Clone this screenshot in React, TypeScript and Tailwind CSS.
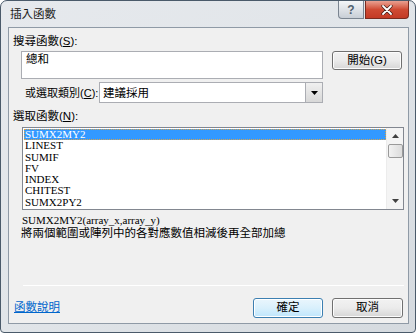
import React from "react";

const cjk = '"Liberation Sans", "Noto Sans CJK TC", "Noto Sans CJK SC", sans-serif';

function Btn({ label, def, className = "" }: { label: string; def?: boolean; className?: string }) {
  return (
    <div
      className={
        "flex items-center justify-center rounded-[3px] border text-[11.5px] text-black " +
        (def
          ? "border-[#3c7fb1] bg-gradient-to-b from-[#eaf6fd] via-[#d9f0fc] to-[#bee6fd] shadow-[inset_0_0_0_1px_#ffffff]"
          : "border-[#707070] bg-gradient-to-b from-[#f2f2f2] via-[#ebebeb] to-[#d6d6d6] shadow-[inset_0_0_0_1px_#fcfcfc]") +
        " " +
        className
      }
      style={{ fontFamily: cjk }}
    >
      {label}
    </div>
  );
}

export default function App() {
  const items = ["SUMX2MY2", "LINEST", "SUMIF", "FV", "INDEX", "CHITEST", "SUMX2PY2"];
  return (
    <div className="w-[416px] h-[333px] bg-white">
      <div className="relative w-[416px] h-[333px] rounded-t-[7px] rounded-b-[4px] border border-[#4a5a6a] bg-gradient-to-br from-[#e6e9ed] via-[#e1e5e9] to-[#d5dadf] flex flex-col">
        {/* title bar */}
        <div className="h-[26px] flex items-start">
          <div className="pl-[9px] pt-[5px] text-[11.5px] text-[#1a1a1a]" style={{ fontFamily: cjk }}>
            插入函數
          </div>
          <div className="ml-auto mr-[6px] flex gap-[1px]">
            <div className="w-[26px] h-[18px] rounded-bl-[4px] border border-t-0 border-[#7a8490] bg-gradient-to-b from-[#f4f6f8] to-[#c8ced6] flex items-center justify-center text-[12px] font-bold text-[#50606e]" style={{ fontFamily: '"Liberation Sans", sans-serif' }}>
              ?
            </div>
            <div className="w-[44px] h-[18px] rounded-br-[4px] border border-t-0 border-[#7a2a1e] bg-gradient-to-b from-[#e8a091] via-[#cf4a33] to-[#c43a25] flex items-center justify-center">
              <svg width="12" height="10" viewBox="0 0 12 10">
                <path d="M2 1 L10 9 M10 1 L2 9" stroke="#3b1a14" strokeWidth="3.2" strokeLinecap="round" />
                <path d="M2 1 L10 9 M10 1 L2 9" stroke="#ffffff" strokeWidth="1.8" strokeLinecap="round" />
              </svg>
            </div>
          </div>
        </div>
        {/* client */}
        <div className="ml-[7px] mr-[6px] h-[297px] border border-[#8f9aa6] bg-[#f0f0f0] flex flex-col text-[11.5px] text-black" style={{ fontFamily: cjk }}>
          <div className="pl-[4px] pt-[5px] leading-[16px] whitespace-nowrap">搜尋函數(<span className="underline">S</span>):</div>
          <div className="flex mt-[2px]">
            <div className="ml-[12px] w-[302px] h-[28px] border border-[#abadb3] bg-white px-[4px] leading-[15px]">總和</div>
            <Btn label="開始(G)" className="ml-[9px] w-[70px] h-[19px]" />
          </div>
          <div className="flex items-center mt-[3px] ml-[16px]">
            <div className="w-[74px] leading-[16px] whitespace-nowrap text-[11px]">或選取類別(<span className="underline">C</span>):</div>
            <div className="w-[224px] h-[21px] border border-[#abadb3] bg-white flex items-center">
              <div className="flex-1 pl-[3px] leading-[16px]">建議採用</div>
              <div className="w-[17px] h-[19px] border-l border-[#abadb3] bg-gradient-to-b from-[#f0f0f0] to-[#d8d8d8] flex items-center justify-center">
                <svg width="7" height="4" viewBox="0 0 7 4"><path d="M0 0 L7 0 L3.5 4 Z" fill="#000" /></svg>
              </div>
            </div>
          </div>
          <div className="pl-[4px] mt-[5px] leading-[16px] whitespace-nowrap">選取函數(<span className="underline">N</span>):</div>
          <div className="ml-[13px] mt-[3px] w-[382px] h-[83px] border border-[#828790] bg-white flex">
            <div className="flex-1 pt-[1px] pl-[1px]" style={{ fontFamily: '"Liberation Serif", serif' }}>
              {items.map((it, i) => (
                <div
                  key={it}
                  className={
                    "h-[11.3px] leading-[11px] text-[11px] pl-[1px] " +
                    (i === 0 ? "bg-[#3399ff] text-white outline-1 outline-dotted outline-[#d9a24a] -outline-offset-1" : "")
                  }
                >
                  {it}
                </div>
              ))}
            </div>
            <div className="w-[17px] bg-[#f4f4f4] border-l border-[#ececec] flex flex-col items-center">
              <div className="h-[16px] flex items-center justify-center">
                <svg width="7" height="4" viewBox="0 0 7 4"><path d="M0 4 L7 4 L3.5 0 Z" fill="#404040" /></svg>
              </div>
              <div className="w-[15px] h-[14px] rounded-[2px] border border-[#9a9a9a] bg-gradient-to-r from-[#f2f2f2] to-[#dcdcdc]" />
              <div className="mt-auto h-[16px] flex items-center justify-center">
                <svg width="7" height="4" viewBox="0 0 7 4"><path d="M0 0 L7 0 L3.5 4 Z" fill="#404040" /></svg>
              </div>
            </div>
          </div>
          <div className="pl-[13px] mt-[4px] text-[11px] leading-[12px]" style={{ fontFamily: '"Liberation Serif", serif' }}>
            SUMX2MY2(array_x,array_y)
          </div>
          <div className="pl-[12px] text-[11.5px] leading-[14px]">將兩個範圍或陣列中的各對應數值相減後再全部加總</div>
          <div className="mt-auto ml-[14px] mr-[4px] h-[1px] bg-[#dcdcdc] border-b border-white" />
          <div className="flex items-center mt-[12px] mb-[5px]">
            <div className="pl-[5px] text-[#0066cc] underline">函數說明</div>
            <Btn label="確定" def className="ml-auto w-[70px] h-[20px]" />
            <Btn label="取消" className="ml-[9px] mr-[5px] w-[71px] h-[20px]" />
          </div>
        </div>
      </div>
    </div>
  );
}
